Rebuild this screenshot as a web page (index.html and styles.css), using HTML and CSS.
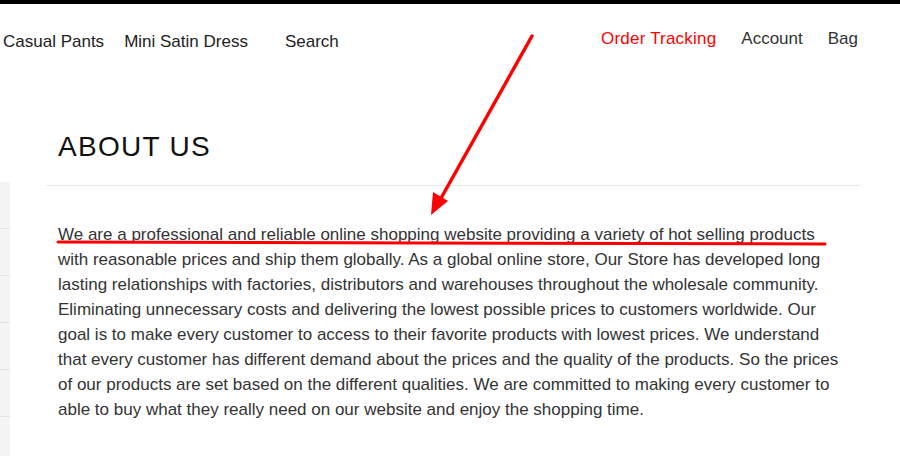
FILE: index.html
```html
<!DOCTYPE html>
<html>
<head>
  <title>About Us</title>
  <link rel="stylesheet" href="styles.css">
</head>
<body>
  <div class="topbar"></div>

  <div class="header">
    <ul class="nav">
      <li><a href="#">Casual Pants</a></li>
      <li><a href="#">Mini Satin Dress</a></li>
      <li class="search"><a href="#">Search</a></li>
    </ul>
    <ul class="nav nav-right">
      <li><a href="#" class="tracking">Order Tracking</a></li>
      <li><a href="#">Account</a></li>
      <li><a href="#">Bag</a></li>
    </ul>
  </div>

  <div class="page">
    <ul class="sidebar">
      <li></li>
      <li></li>
      <li></li>
      <li></li>
      <li></li>
      <li></li>
    </ul>

    <div class="content">
      <h1>ABOUT US</h1>
      <p>We are a professional and reliable online shopping website providing a variety of hot selling products with reasonable prices and ship them globally. As a global online store, Our Store has developed long lasting relationships with factories, distributors and warehouses throughout the wholesale community. Eliminating unnecessary costs and delivering the lowest possible prices to customers worldwide. Our goal is to make every customer to access to their favorite products with lowest prices. We understand that every customer has different demand about the prices and the quality of the products. So the prices of our products are set based on the different qualities. We are committed to making every customer to able to buy what they really need on our website and enjoy the shopping time.</p>
    </div>
  </div>

  <!-- red markup drawn over the screenshot -->
  <svg class="markup" width="900" height="456" viewBox="0 0 900 456">
    <path d="M58 242 Q440 242 825 244" fill="none" stroke="#f00" stroke-width="3" stroke-linecap="round"/>
    <line x1="532" y1="36" x2="440" y2="200" stroke="#f00" stroke-width="3.5" stroke-linecap="round"/>
    <polygon points="431,215 433,192 448,201" fill="#f00"/>
  </svg>
</body>
</html>
```

FILE: styles.css
```css
body {
  margin: 0;
  font-family: 'Liberation Sans', Arial, Helvetica, sans-serif;
  color: #333;
  background-color: #fff;
  position: relative;
  overflow: hidden;
}

.topbar {
  height: 4px;
  background-color: #000;
}

.header {
  display: flex;
  justify-content: space-between;
  padding: 0 42px 0 3px;
  height: 80px;
}

.nav {
  list-style: none;
  margin: 0;
  padding: 0;
  display: flex;
  gap: 20px;
  padding-top: 28px;
}

.nav a {
  text-decoration: none;
  color: #222;
  font-size: 17px;
}

.nav .search {
  margin-left: 17px;
}

.nav-right {
  padding-top: 25px;
  gap: 25px;
}

.nav-right a {
  color: #333;
}

.nav-right a.tracking {
  color: #f00;
  letter-spacing: 0.2px;
}

.page {
  display: flex;
}

.sidebar {
  list-style: none;
  margin: 98px 0 0 0;
  padding: 0;
  width: 10px;
}

.sidebar li {
  height: 46px;
  background-color: #f4f4f4;
  border-bottom: 1px solid #e2e2e2;
}

.content {
  margin-left: 36px;
  width: 814px;
}

.content h1 {
  margin: 0;
  padding: 47px 12px 22px;
  font-size: 28px;
  font-weight: normal;
  letter-spacing: 1.3px;
  color: #111;
  border-bottom: 1px solid #e8e8e8;
}

.content p {
  margin: 0;
  padding: 36px 12px 0;
  font-size: 17px;
  line-height: 25px;
  color: #333;
}

.markup {
  position: absolute;
  left: 0;
  top: 0;
  pointer-events: none;
}
```
